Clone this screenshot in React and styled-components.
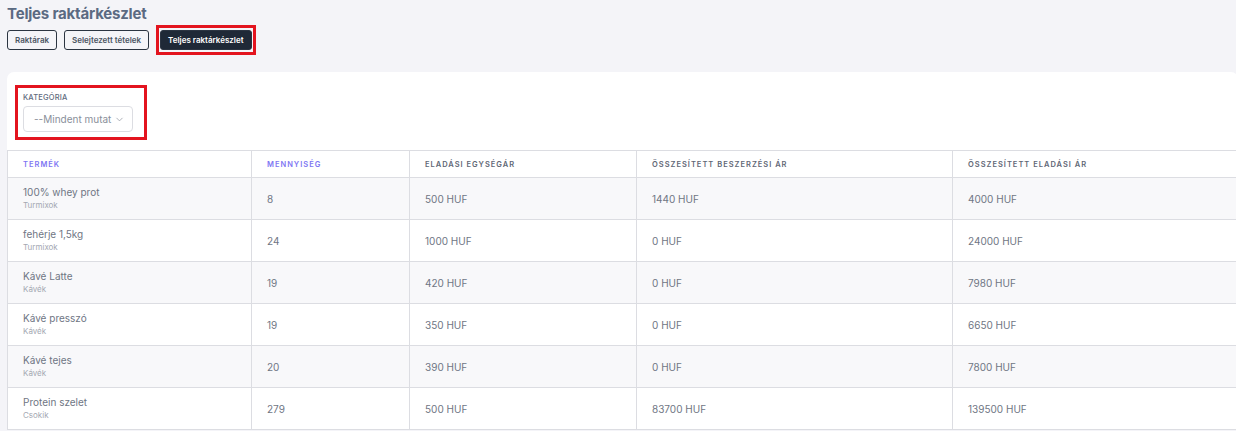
import React from "react";
import styled, { createGlobalStyle } from "styled-components";
import { ChevronDown } from "lucide-react";

const GlobalStyle = createGlobalStyle`
  body {
    margin: 0;
    background: #f4f4f8;
    font-family: "Inter", "Noto Sans", sans-serif;
    overflow: hidden;
  }
`;

const Page = styled.div`
  padding: 4px 0 0 7px;
`;

const Title = styled.h1`
  margin: 0;
  font-size: 15px;
  line-height: 20px;
  font-weight: 700;
  color: #5b6a82;
  letter-spacing: -0.2px;
`;

const ButtonRow = styled.div`
  display: flex;
  align-items: center;
  gap: 7px;
  margin-top: 1px;
`;

const Marker = styled.div`
  display: flex;
  border: 3px solid #e3141f;
  padding: ${(p) => p.$pad || "0"};
`;

const TabButton = styled.button`
  height: 20px;
  padding: 0 7px;
  border-radius: 3px;
  font-family: inherit;
  font-size: 8px;
  font-weight: 600;
  border: 1.5px solid #2b3441;
  background: ${(p) => (p.$active ? "#1f2937" : "#f4f4f8")};
  color: ${(p) => (p.$active ? "#ffffff" : "#4b5563")};
  cursor: pointer;
`;

const Card = styled.div`
  margin-top: 17px;
  width: 1231px;
  background: #ffffff;
  border-radius: 7px 7px 0 0;
  overflow: hidden;
`;

const Filters = styled.div`
  padding: 13px 0 10px 8px;
  display: flex;
`;

const FilterBox = styled.div`
  border: 3px solid #e3141f;
  padding: 5px 11px 5px 5px;
  display: flex;
  flex-direction: column;
  gap: 4px;
`;

const Label = styled.div`
  font-size: 7.5px;
  font-weight: 500;
  color: #5f6b7e;
  letter-spacing: 0.2px;
`;

const Select = styled.div`
  width: 110px;
  height: 26px;
  box-sizing: border-box;
  border: 1px solid #dcdde2;
  border-radius: 4px;
  display: flex;
  align-items: center;
  justify-content: space-between;
  padding: 0 7px 0 10px;
  font-size: 10px;
  color: #8a8f9a;
`;

const Table = styled.table`
  width: 1320px;
  border-collapse: collapse;
  table-layout: fixed;
`;

const Th = styled.th`
  height: 27px;
  padding: 0 0 0 15px;
  box-sizing: border-box;
  text-align: left;
  font-size: 7.5px;
  font-weight: 600;
  letter-spacing: 1px;
  text-transform: uppercase;
  color: ${(p) => (p.$accent ? "#7e76f3" : "#5f6776")};
  border: 1px solid #dcdde2;
`;

const Tr = styled.tr`
  background: ${(p) => (p.$striped ? "#f8f8fa" : "#ffffff")};
`;

const Td = styled.td`
  height: 42px;
  padding: 0 0 0 15px;
  box-sizing: border-box;
  font-size: 10px;
  color: #6f7684;
  border: 1px solid #dcdde2;
  vertical-align: middle;
`;

const Name = styled.div`
  font-size: 10px;
  line-height: 13px;
  color: #6f7684;
`;

const Sub = styled.div`
  font-size: 8px;
  line-height: 13px;
  color: #a4a8b2;
`;

const columns = [
  { label: "Termék", width: 244, accent: true },
  { label: "Mennyiség", width: 158, accent: true },
  { label: "Eladási egységár", width: 227 },
  { label: "Összesített beszerzési ár", width: 316 },
  { label: "Összesített eladási ár", width: 375 },
];

const rows = [
  { name: "100% whey prot", cat: "Turmixok", qty: 8, unit: 500, buy: 1440, sell: 4000 },
  { name: "fehérje 1,5kg", cat: "Turmixok", qty: 24, unit: 1000, buy: 0, sell: 24000 },
  { name: "Kávé Latte", cat: "Kávék", qty: 19, unit: 420, buy: 0, sell: 7980 },
  { name: "Kávé presszó", cat: "Kávék", qty: 19, unit: 350, buy: 0, sell: 6650 },
  { name: "Kávé tejes", cat: "Kávék", qty: 20, unit: 390, buy: 0, sell: 7800 },
  { name: "Protein szelet", cat: "Csokik", qty: 279, unit: 500, buy: 83700, sell: 139500 },
];

export default function App() {
  return (
    <>
      <GlobalStyle />
      <Page>
        <Title>Teljes raktárkészlet</Title>
        <ButtonRow>
          <TabButton>Raktárak</TabButton>
          <TabButton>Selejtezett tételek</TabButton>
          <Marker $pad="2px 1px">
            <TabButton $active>Teljes raktárkészlet</TabButton>
          </Marker>
        </ButtonRow>
        <Card>
          <Filters>
            <FilterBox>
              <Label>KATEGÓRIA</Label>
              <Select>
                <span>--Mindent mutat</span>
                <ChevronDown size={11} strokeWidth={1.5} color="#8a8f9a" />
              </Select>
            </FilterBox>
          </Filters>
          <Table>
            <colgroup>
              {columns.map((c) => (
                <col key={c.label} style={{ width: c.width }} />
              ))}
            </colgroup>
            <thead>
              <tr>
                {columns.map((c) => (
                  <Th key={c.label} $accent={c.accent}>
                    {c.label}
                  </Th>
                ))}
              </tr>
            </thead>
            <tbody>
              {rows.map((r, i) => (
                <Tr key={r.name} $striped={i % 2 === 0}>
                  <Td>
                    <Name>{r.name}</Name>
                    <Sub>{r.cat}</Sub>
                  </Td>
                  <Td>{r.qty}</Td>
                  <Td>{r.unit} HUF</Td>
                  <Td>{r.buy} HUF</Td>
                  <Td>{r.sell} HUF</Td>
                </Tr>
              ))}
            </tbody>
          </Table>
        </Card>
      </Page>
    </>
  );
}
